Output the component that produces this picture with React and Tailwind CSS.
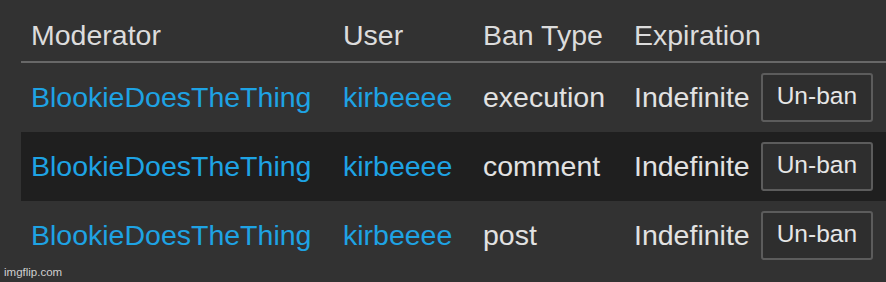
import React from "react";

const rows = [
  { type: "execution", dark: false },
  { type: "comment", dark: true },
  { type: "post", dark: false },
];

export default function App() {
  return (
    <div
      className="relative w-[886px] h-[282px] bg-[#323232] overflow-hidden text-[28.5px] leading-none"
      style={{ fontFamily: '"Liberation Sans", Arial, sans-serif' }}
    >
      <div className="ml-[21px]">
        <div className="grid grid-cols-[312px_140px_151px_1fr] h-[61px] pt-[10px] items-center text-[#dcdcdc]">
          <div className="pl-[10px]">Moderator</div>
          <div className="pl-[10px]">User</div>
          <div className="pl-[10px]">Ban Type</div>
          <div className="pl-[10px]">Expiration</div>
        </div>
        <div className="h-[2px] bg-[#686868]" />
        {rows.map((r, i) => (
          <div
            key={i}
            className={
              "grid grid-cols-[312px_140px_151px_1fr] h-[69px] items-center " +
              (r.dark ? "bg-[#1f1f1f]" : "")
            }
          >
            <div className="pl-[10px] text-[#1ea3e4]">BlookieDoesTheThing</div>
            <div className="pl-[10px] text-[#1ea3e4]">kirbeeee</div>
            <div className="pl-[10px] text-[#e2e2e2]">{r.type}</div>
            <div className="pl-[10px] flex items-center text-[#e2e2e2]">
              <span>Indefinite</span>
              <button className="ml-[11px] h-[49px] px-[14px] border-2 border-[#5c5c5c] rounded-[3px] bg-[#2e2e2e] text-[24.5px] text-[#e6e6e6] leading-none pb-[3px]">
                Un-ban
              </button>
            </div>
          </div>
        ))}
      </div>
      <div className="absolute left-[4px] top-[267px] text-[11.5px] text-[#cfcfcf] leading-none">
        imgflip.com
      </div>
    </div>
  );
}
